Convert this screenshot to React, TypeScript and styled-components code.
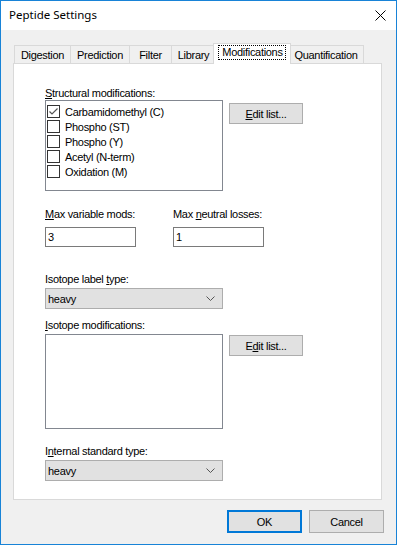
import * as React from "react";
import styled, { createGlobalStyle } from "styled-components";

const GlobalStyle = createGlobalStyle`
  html, body {
    margin: 0;
    padding: 0;
    background: #ffffff;
  }
  * {
    box-sizing: border-box;
  }
`;

const Window = styled.div`
  width: 397px;
  height: 545px;
  border: 1px solid #1883d7;
  background: #f0f0f0;
  display: flex;
  flex-direction: column;
  font-family: "Liberation Sans", Arial, sans-serif;
  font-size: 11px;
  letter-spacing: -0.3px;
  color: #000;
`;

const TitleBar = styled.div`
  height: 29px;
  background: #ffffff;
  display: flex;
  align-items: center;
  justify-content: space-between;
  padding: 0 9px 0 8px;
`;

const Title = styled.span`
  font-family: "Noto Sans", "Liberation Sans", sans-serif;
  font-size: 11.5px;
  letter-spacing: 0;
  color: #000;
  padding-bottom: 2px;
`;

const CloseButton = styled.div`
  width: 12px;
  height: 12px;
  display: flex;
  align-items: center;
  justify-content: center;
  margin-right: 1px;
  margin-bottom: 1px;
`;

const Body = styled.div`
  flex: 1;
  display: flex;
  flex-direction: column;
  padding: 13px 12px 0 12px;
`;

const TabStrip = styled.div`
  display: flex;
  align-items: flex-end;
  height: 20px;
  padding-left: 1px;
`;

const Tab = styled.div<{ $w: number; $active?: boolean }>`
  width: ${(p) => (p.$active ? p.$w + 4 : p.$w)}px;
  height: ${(p) => (p.$active ? 21 : 18)}px;
  margin-left: ${(p) => (p.$active ? -3 : -1)}px;
  margin-right: ${(p) => (p.$active ? -2 : 0)}px;
  margin-bottom: ${(p) => (p.$active ? -1 : 0)}px;
  border: 1px solid #d9d9d9;
  border-bottom: none;
  background: ${(p) => (p.$active ? "#ffffff" : "#f0f0f0")};
  position: relative;
  z-index: ${(p) => (p.$active ? 1 : 0)};
  display: flex;
  justify-content: center;
  align-items: ${(p) => (p.$active ? "flex-start" : "center")};
  padding-top: ${(p) => (p.$active ? 2 : 0)}px;
  white-space: nowrap;

  &:first-child {
    margin-left: 0;
  }
`;

const FocusText = styled.span`
  outline: 1px dotted #000;
  outline-offset: 0;
  padding: 0 2px 0 3px;
  line-height: 13px;
`;

const Panel = styled.div`
  width: 369px;
  height: 437px;
  border: 1px solid #d9d9d9;
  background: #ffffff;
  display: flex;
  flex-direction: column;
  padding: 23px 0 0 31px;
`;

const Label = styled.div<{ $mt?: number }>`
  line-height: 13px;
  height: 13px;
  margin-top: ${(p) => p.$mt ?? 0}px;
  white-space: nowrap;
`;

const U = styled.span`
  text-decoration: underline;
  text-underline-offset: 1px;
`;

const Row = styled.div<{ $mt?: number; $gap?: number }>`
  display: flex;
  align-items: flex-start;
  gap: ${(p) => p.$gap ?? 6}px;
  margin-top: ${(p) => p.$mt ?? 0}px;
`;

const ListBox = styled.div<{ $h: number }>`
  width: 178px;
  height: ${(p) => p.$h}px;
  border: 1px solid #828790;
  background: #fff;
  padding: 3px 0 0 1px;
  display: flex;
  flex-direction: column;
`;

const CheckRow = styled.div`
  height: 15px;
  display: flex;
  align-items: center;
  gap: 5px;
  white-space: nowrap;
`;

const CheckBox = styled.div`
  width: 13px;
  height: 13px;
  border: 1px solid #333333;
  background: #fff;
  display: flex;
  align-items: center;
  justify-content: center;
`;

const Button = styled.div<{ $w?: number; $h?: number; $default?: boolean; $mt?: number }>`
  width: ${(p) => p.$w ?? 74}px;
  height: ${(p) => p.$h ?? 21}px;
  margin-top: ${(p) => p.$mt ?? 0}px;
  background: #e1e1e1;
  border: ${(p) => (p.$default ? "2px solid #0078d7" : "1px solid #adadad")};
  display: flex;
  align-items: center;
  justify-content: center;
  white-space: nowrap;
`;

const FieldGroup = styled.div<{ $w: number }>`
  width: ${(p) => p.$w}px;
  display: flex;
  flex-direction: column;
  gap: 6px;
`;

const TextBox = styled.div<{ $w: number }>`
  width: ${(p) => p.$w}px;
  height: 20px;
  border: 1px solid #7a7a7a;
  background: #fff;
  padding-left: 2px;
  display: flex;
  align-items: center;
`;

const Combo = styled.div<{ $mt?: number }>`
  width: 178px;
  height: 21px;
  margin-top: ${(p) => p.$mt ?? 0}px;
  background: #e1e1e1;
  border: 1px solid #adadad;
  display: flex;
  align-items: center;
  justify-content: space-between;
  padding: 0 7px 0 2px;
`;

const Footer = styled.div`
  display: flex;
  justify-content: flex-end;
  gap: 7px;
  margin-top: 10px;
`;

const Chevron = () => (
  <svg width="9" height="5" viewBox="0 0 9 5">
    <polyline points="0.5,0.5 4.5,4.5 8.5,0.5" fill="none" stroke="#555" strokeWidth="1" />
  </svg>
);

const tabs = [
  { name: "Digestion", w: 57 },
  { name: "Prediction", w: 60 },
  { name: "Filter", w: 43 },
  { name: "Library", w: 45 },
  { name: "Modifications", w: 74, active: true },
  { name: "Quantification", w: 76 },
];

const mods = [
  { name: "Carbamidomethyl (C)", checked: true },
  { name: "Phospho (ST)" },
  { name: "Phospho (Y)" },
  { name: "Acetyl (N-term)" },
  { name: "Oxidation (M)" },
];

const App = () => {
  return (
    <>
      <GlobalStyle />
      <Window>
        <TitleBar>
          <Title>Peptide Settings</Title>
          <CloseButton>
            <svg width="11" height="11" viewBox="0 0 11 11">
              <path d="M0.5 0.5 L10.5 10.5 M10.5 0.5 L0.5 10.5" stroke="#000" strokeWidth="1" />
            </svg>
          </CloseButton>
        </TitleBar>
        <Body>
          <TabStrip>
            {tabs.map((t) => (
              <Tab key={t.name} $w={t.w} $active={t.active}>
                {t.active ? <FocusText>{t.name}</FocusText> : t.name}
              </Tab>
            ))}
          </TabStrip>
          <Panel>
            <Label>
              <U>S</U>tructural modifications:
            </Label>
            <Row>
              <ListBox $h={91}>
                {mods.map((m) => (
                  <CheckRow key={m.name}>
                    <CheckBox>
                      {m.checked && (
                        <svg width="11" height="11" viewBox="0 0 11 11">
                          <polyline points="1.5,5.5 4,8 9.5,2.5" fill="none" stroke="#555" strokeWidth="1.2" />
                        </svg>
                      )}
                    </CheckBox>
                    {m.name}
                  </CheckRow>
                ))}
              </ListBox>
              <Button $mt={3}>
                <span>
                  <U>E</U>dit list...
                </span>
              </Button>
            </Row>
            <Row $mt={17} $gap={37}>
              <FieldGroup $w={91}>
                <Label>
                  <U>M</U>ax variable mods:
                </Label>
                <TextBox $w={91}>3</TextBox>
              </FieldGroup>
              <FieldGroup $w={91}>
                <Label>
                  Max <U>n</U>eutral losses:
                </Label>
                <TextBox $w={91}>1</TextBox>
              </FieldGroup>
            </Row>
            <Label $mt={26}>
              Isotope label <U>t</U>ype:
            </Label>
            <Combo $mt={2}>
              <span>heavy</span>
              <Chevron />
            </Combo>
            <Label $mt={10}>
              <U>I</U>sotope modifications:
            </Label>
            <Row $mt={2}>
              <ListBox $h={95} />
              <Button $mt={1}>
                <span>
                  E<U>d</U>it list...
                </span>
              </Button>
            </Row>
            <Label $mt={16}>
              I<U>n</U>ternal standard type:
            </Label>
            <Combo $mt={2}>
              <span>heavy</span>
              <Chevron />
            </Combo>
          </Panel>
          <Footer>
            <Button $w={75} $h={23} $default>
              OK
            </Button>
            <Button $w={75} $h={23}>
              Cancel
            </Button>
          </Footer>
        </Body>
      </Window>
    </>
  );
};

export default App;
